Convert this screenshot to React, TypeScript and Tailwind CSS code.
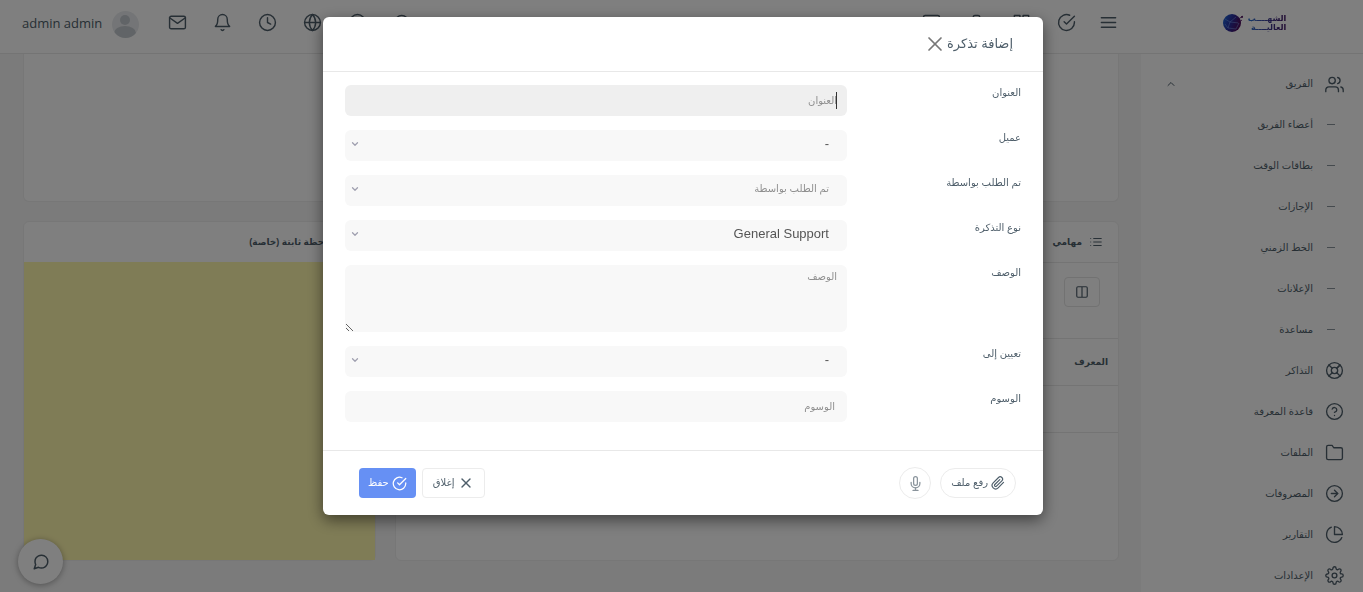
import { useState, type ReactNode } from 'react';
import type { IconType } from 'react-icons';
import {
  FiArrowRightCircle,
  FiBell,
  FiBriefcase,
  FiCheckCircle,
  FiChevronDown,
  FiChevronUp,
  FiClock,
  FiColumns,
  FiFolder,
  FiGlobe,
  FiGrid,
  FiHelpCircle,
  FiLifeBuoy,
  FiList,
  FiMail,
  FiMenu,
  FiMessageCircle,
  FiMic,
  FiMonitor,
  FiPaperclip,
  FiPieChart,
  FiPlusCircle,
  FiSearch,
  FiSettings,
  FiUsers,
  FiX,
} from 'react-icons/fi';

const teamLinks = ['أعضاء الفريق', 'بطاقات الوقت', 'الإجازات', 'الخط الزمني', 'الإعلانات', 'مساعدة'];

const menuLinks: { label: string; icon: IconType }[] = [
  { label: 'التذاكر', icon: FiLifeBuoy },
  { label: 'قاعدة المعرفة', icon: FiHelpCircle },
  { label: 'الملفات', icon: FiFolder },
  { label: 'المصروفات', icon: FiArrowRightCircle },
  { label: 'التقارير', icon: FiPieChart },
  { label: 'الإعدادات', icon: FiSettings },
];

const shortcuts: { label: string; icon: IconType }[] = [
  { label: 'المهام', icon: FiCheckCircle },
  { label: 'المشاريع', icon: FiGrid },
  { label: 'العملاء', icon: FiBriefcase },
  { label: 'لوحة التحكم', icon: FiMonitor },
];

const tools: { label: string; icon: IconType }[] = [
  { label: 'بحث', icon: FiSearch },
  { label: 'إضافة', icon: FiPlusCircle },
  { label: 'اللغة', icon: FiGlobe },
  { label: 'الوقت', icon: FiClock },
  { label: 'الإشعارات', icon: FiBell },
  { label: 'الرسائل', icon: FiMail },
];

const fieldClass =
  'block w-full rounded-md bg-[#f8f8f8] placeholder:text-[#8f8f8f] outline-none focus:bg-[#efefef]';

function Logo() {
  return (
    <a href="#" className="flex items-center gap-1" aria-label="الشهب العالية">
      <div className="bg-gradient-to-l from-[#3a0a5e] to-[#1f6fd0] bg-clip-text text-[8px] leading-[9px] font-bold text-transparent">
        <div>الشهــــب</div>
        <div>العاليــــة</div>
      </div>
      <svg width="22" height="20" viewBox="0 0 22 20">
        <defs>
          <linearGradient id="globe" x1="0" y1="0" x2="1" y2="0.4">
            <stop offset="0" stopColor="#1c6fe0" />
            <stop offset="0.55" stopColor="#2a2c9a" />
            <stop offset="1" stopColor="#4c0c5c" />
          </linearGradient>
        </defs>
        <circle cx="10" cy="10" r="9" fill="url(#globe)" />
        <path d="M3 6l5 3 6-5M8 9l-2 6 8 1 3-6-9-1M6 15l-3-4" stroke="#7fa4ee" strokeWidth="0.5" fill="none" />
        <path d="M15 7l6-4M16 10l4-3" stroke="#4c0c5c" strokeWidth="0.8" />
        <circle cx="20" cy="4" r="1" fill="#4c0c5c" />
      </svg>
    </a>
  );
}

function IconButton({ label, icon: Icon }: { label: string; icon: IconType }) {
  return (
    <button type="button" aria-label={label} className="flex w-[45px] justify-center">
      <Icon size={19} strokeWidth={1.8} />
    </button>
  );
}

function TopBar() {
  return (
    <header className="flex h-[54px] items-center border-b border-[#e8e8e8] bg-white pb-2">
      <div className="flex w-[222px] justify-center pl-1">
        <Logo />
      </div>
      <div className="flex flex-1 items-center pr-[10px]">
        <IconButton label="القائمة" icon={FiMenu} />
        <div className="-mr-[3px] flex items-center">
          {shortcuts.map((item) => (
            <IconButton key={item.label} {...item} />
          ))}
        </div>
      </div>
      <div className="flex items-center">
        {tools.map((item) => (
          <IconButton key={item.label} {...item} />
        ))}
      </div>
      <button type="button" className="mr-4 ml-[22px] flex items-center gap-[10px]">
        <span className="mt-1 block size-[27px] overflow-hidden rounded-full bg-[#e9ebee]">
          <svg viewBox="0 0 27 27">
            <circle cx="13" cy="9" r="5" fill="#c3c9ce" />
            <ellipse cx="13" cy="22" rx="11" ry="7" fill="#c3c9ce" />
          </svg>
        </span>
        <span dir="ltr" className="font-['Open_Sans',sans-serif] text-[13px]">
          admin admin
        </span>
      </button>
    </header>
  );
}

function Sidebar() {
  return (
    <nav className="w-[222px] shrink-0 overflow-hidden bg-white pt-[10px]">
      <a href="#" className="flex h-10 items-center gap-3 pr-[19px] pl-6">
        <FiUsers size={19} strokeWidth={1.7} />
        <span>الفريق</span>
        <FiChevronUp size={12} className="mr-auto" />
      </a>
      <ul>
        {teamLinks.map((label) => (
          <li key={label}>
            <a href="#" className="flex h-[41px] items-center gap-[14px] pr-7">
              <span className="w-2 border-t border-[#8b959d]" />
              <span>{label}</span>
            </a>
          </li>
        ))}
      </ul>
      <ul>
        {menuLinks.map(({ label, icon: Icon }) => (
          <li key={label}>
            <a href="#" className="flex h-[41px] items-center gap-3 pr-[19px]">
              <Icon size={19} strokeWidth={1.7} />
              <span>{label}</span>
            </a>
          </li>
        ))}
      </ul>
    </nav>
  );
}

function Dashboard() {
  return (
    <main className="flex min-w-0 flex-1 flex-col gap-[19px] bg-[#f6f6f6] pr-[22px] pl-[23px]">
      <div className="h-[148px] shrink-0 rounded-b-md border border-t-0 border-[#eee] bg-white" />
      <div className="grid grid-cols-3 gap-[19px]">
        <section className="col-span-2 h-[340px] rounded-md border border-[#eee] bg-white">
          <h2 className="flex h-10 items-center gap-[7px] pr-[15px] text-[9px] font-bold">
            <FiList size={14} strokeWidth={1.7} />
            مهامي
          </h2>
          <div className="h-[76px] border-t border-[#e8e8e8] pt-[14px] pr-[18px]">
            <button
              type="button"
              aria-label="الأعمدة"
              className="flex h-[30px] w-9 items-center justify-center rounded border border-[#e4e4e4]"
            >
              <FiColumns size={14} />
            </button>
          </div>
          <table className="w-full border-t border-[#e8e8e8] text-[9px]">
            <thead>
              <tr className="h-[47px] border-b border-[#e8e8e8]">
                <th className="pr-[10px] text-right">المعرف</th>
              </tr>
            </thead>
            <tbody>
              <tr className="h-[47px] border-b border-[#e8e8e8]">
                <td />
              </tr>
            </tbody>
          </table>
        </section>
        <section className="flex h-[340px] flex-col rounded-md border border-[#eee] bg-white">
          <h2 className="flex h-10 items-center gap-2 pr-4 text-[9px] font-bold">
            <FiList size={14} strokeWidth={1.7} />
            ملاحظة ثابتة (خاصة)
          </h2>
          <textarea aria-label="ملاحظة ثابتة" className="block w-full flex-1 resize-none bg-[#fff8ad]" />
        </section>
      </div>
    </main>
  );
}

function Row({ id, label, children }: { id: string; label: string; children: ReactNode }) {
  return (
    <div className="flex">
      <label htmlFor={id} className="w-[174px] shrink-0">
        {label}
      </label>
      <div className="relative flex-1">{children}</div>
    </div>
  );
}

function SelectField({ id, options, muted }: { id: string; options: string[]; muted?: boolean }) {
  return (
    <>
      <select
        id={id}
        className={`${fieldClass} h-[31px] appearance-none pr-[18px] pb-1 pl-6 ${muted ? 'text-[#8f8f8f]' : 'text-[13px] text-[#555]'}`}
      >
        {options.map((option) => (
          <option key={option}>{option}</option>
        ))}
      </select>
      <FiChevronDown size={10} strokeWidth={3} className="pointer-events-none absolute top-[9px] left-[5px] text-[#a0a0b0]" />
    </>
  );
}

function TicketDialog({ onClose }: { onClose: () => void }) {
  const [title, setTitle] = useState('');

  return (
    <div className="fixed inset-0 flex items-start justify-center bg-black/50 pt-[17px] pl-[3px]">
      <form
        role="dialog"
        aria-labelledby="dialog-title"
        className="w-full max-w-[720px] rounded-md bg-white shadow-[0_5px_15px_rgba(0,0,0,0.5)]"
        onSubmit={(e) => e.preventDefault()}
      >
        <div className="flex h-[55px] items-center border-b border-[#e8e8e8] pr-[30px]">
          <h1 id="dialog-title" className="text-[13px]">
            إضافة تذكرة
          </h1>
          <button type="button" aria-label="إغلاق" onClick={onClose}>
            <FiX size={24} strokeWidth={1.7} className="text-[#777]" />
          </button>
        </div>

        <div className="flex flex-col gap-[14px] px-[22px] pt-[13px] pb-7">
          <Row id="title" label="العنوان">
            <input
              id="title"
              type="text"
              autoFocus
              value={title}
              onChange={(e) => setTitle(e.target.value)}
              placeholder="العنوان"
              className={`${fieldClass} h-[31px] px-[10px]`}
            />
            {/* steady caret while the field is empty */}
            {title === '' && (
              <span aria-hidden="true" className="pointer-events-none absolute top-[7px] right-[10px] h-[17px] w-px bg-[#333]" />
            )}
          </Row>
          <Row id="client" label="عميل">
            <SelectField id="client" options={['-']} />
          </Row>
          <Row id="requested-by" label="تم الطلب بواسطة">
            <SelectField id="requested-by" options={['تم الطلب بواسطة']} muted />
          </Row>
          <Row id="type" label="نوع التذكرة">
            <SelectField id="type" options={['General Support']} />
          </Row>
          <Row id="description" label="الوصف">
            <textarea id="description" placeholder="الوصف" className={`${fieldClass} h-[67px] px-[10px] py-1`} />
          </Row>
          <Row id="assign" label="تعيين إلى">
            <SelectField id="assign" options={['-']} />
          </Row>
          <Row id="labels" label="الوسوم">
            <input id="labels" type="text" placeholder="الوسوم" className={`${fieldClass} h-[31px] px-3`} />
          </Row>
        </div>

        <div className="flex h-[65px] items-center gap-[9px] border-t border-[#e8e8e8] pr-[27px] pl-9">
          <button type="button" className="flex h-[30px] items-center gap-[3px] rounded-full border border-[#ececec] px-[10px]">
            <FiPaperclip size={14} />
            رفع ملف
          </button>
          <button
            type="button"
            aria-label="تسجيل صوتي"
            className="ml-auto flex size-8 items-center justify-center rounded-full border border-[#ececec] text-[#8a949c]"
          >
            <FiMic size={15} />
          </button>
          <button
            type="button"
            onClick={onClose}
            className="flex h-[30px] items-center gap-1 rounded border border-[#ececec] px-[10px]"
          >
            <FiX size={16} />
            إغلاق
          </button>
          <button type="submit" className="-mr-[3px] flex h-[30px] items-center gap-[3px] rounded bg-[#6690f4] px-[9px] text-white">
            <FiCheckCircle size={15} />
            حفظ
          </button>
        </div>
      </form>
    </div>
  );
}

export default function App() {
  const [open, setOpen] = useState(true);

  return (
    <div
      dir="rtl"
      className="flex h-screen flex-col overflow-hidden bg-[#f6f6f6] font-['Liberation_Sans','DejaVu_Sans',sans-serif] text-[10px] leading-4 text-[#4e5e6a]"
    >
      <TopBar />
      <div className="flex min-h-0 flex-1">
        <Sidebar />
        <Dashboard />
      </div>
      <button
        type="button"
        aria-label="المحادثة"
        onClick={() => setOpen(true)}
        className="fixed bottom-2 left-[18px] flex size-[45px] items-center justify-center rounded-full bg-white shadow-[0_1px_6px_rgba(0,0,0,0.35)]"
      >
        <FiMessageCircle size={18} />
      </button>
      {open && <TicketDialog onClose={() => setOpen(false)} />}
    </div>
  );
}
